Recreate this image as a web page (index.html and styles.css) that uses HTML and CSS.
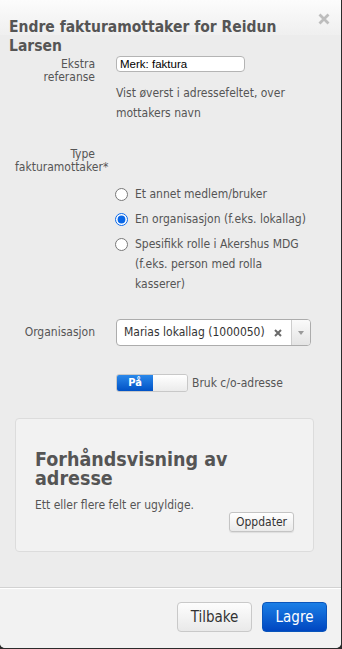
FILE: index.html
```html
<!DOCTYPE html>
<html lang="no">
<head>
    <meta charset="UTF-8">
    <meta name="viewport" content="width=device-width, initial-scale=1.0">
    <title>Endre fakturamottaker</title>
    <link rel="stylesheet" href="styles.css">
</head>
<body>
    <div class="dialog">
        <div class="dialog-head">
            <h2 class="dialog-title">Endre fakturamottaker for Reidun Larsen</h2>
            <button class="close" title="Lukk">
                <svg width="12" height="12" viewBox="0 0 12 12"><path d="M1.5 1.5L10.5 10.5M10.5 1.5L1.5 10.5" stroke="#bdbdbd" stroke-width="2.8" fill="none"/></svg>
            </button>
        </div>

        <div class="dialog-body">
            <div class="row">
                <label class="lbl" for="ref">Ekstra referanse</label>
                <div class="field">
                    <input class="text-input" id="ref" type="text" value="Merk: faktura">
                    <p class="hint">Vist øverst i adressefeltet, over mottakers navn</p>
                </div>
            </div>

            <div class="row row-type">
                <div class="lbl">Type fakturamottaker*</div>
                <div class="field options">
                    <label class="option"><input type="radio" name="type"> <span>Et annet medlem/bruker</span></label>
                    <label class="option"><input type="radio" name="type" checked> <span>En organisasjon (f.eks. lokallag)</span></label>
                    <label class="option"><input type="radio" name="type"> <span>Spesifikk rolle i Akershus MDG (f.eks. person med rolla kasserer)</span></label>
                </div>
            </div>

            <div class="row row-org">
                <div class="lbl">Organisasjon</div>
                <div class="field">
                    <div class="select">
                        <span class="select-value">Marias lokallag (1000050)</span>
                        <span class="select-clear">
                            <svg width="8" height="8" viewBox="0 0 8 8"><path d="M1 1L7 7M7 1L1 7" stroke="#6a6a6a" stroke-width="2" fill="none"/></svg>
                        </span>
                        <span class="select-arrow">
                            <svg width="6" height="4" viewBox="0 0 6 4"><path d="M0 0H6L3 4Z" fill="#9a9a9a"/></svg>
                        </span>
                    </div>
                </div>
            </div>

            <div class="row row-co">
                <div class="lbl"></div>
                <div class="field co">
                    <div class="toggle">
                        <span class="toggle-on">På</span>
                        <span class="toggle-off"></span>
                    </div>
                    <span>Bruk c/o-adresse</span>
                </div>
            </div>

            <div class="preview">
                <h3>Forhåndsvisning av adresse</h3>
                <p>Ett eller flere felt er ugyldige.</p>
                <div class="preview-actions">
                    <button class="btn-small">Oppdater</button>
                </div>
            </div>
        </div>

        <div class="dialog-foot">
            <button class="btn btn-back">Tilbake</button>
            <button class="btn btn-save">Lagre</button>
        </div>
    </div>
</body>
</html>
```

FILE: styles.css
```css
html, body {
    margin: 0;
    padding: 0;
    background-color: #2b2b2b;
}
body {
    height: 649px;
    font-family: "DejaVu Sans Condensed", "DejaVu Sans", sans-serif;
    font-stretch: condensed;
    color: #555;
}
.dialog {
    width: 341px;
    height: 648px;
    display: flex;
    flex-direction: column;
    background: linear-gradient(#fcfcfc, #efefef) 0 0 / 100% 35px no-repeat, #ececec;
    border-radius: 0 0 5px 5px;
    overflow: hidden;
}
.dialog-head {
    display: flex;
    align-items: flex-start;
    padding: 18px 11px 0 9px;
}
.dialog-title {
    flex: 1;
    margin: 0;
    font-size: 15.5px;
    line-height: 19px;
    font-weight: bold;
    color: #555;
}
.close {
    margin: -5px 0 0 8px;
    padding: 0;
    width: 12px;
    height: 12px;
    border: none;
    background: none;
    cursor: pointer;
}
.close svg {
    display: block;
}
.dialog-body {
    flex: 1;
    padding: 0 27px 0 15px;
}
.row {
    display: grid;
    grid-template-columns: 80px 1fr;
    column-gap: 21px;
}
.lbl {
    text-align: right;
    font-size: 12px;
    line-height: 13px;
    padding-top: 2px;
    color: #555;
}
.text-input {
    display: block;
    box-sizing: border-box;
    width: 129px;
    height: 16px;
    padding: 0 3px;
    border: 1px solid #b4b4b4;
    border-radius: 4px;
    background-color: #fff;
    font-family: "Liberation Sans", Arial, sans-serif;
    font-size: 11.5px;
    color: #000;
    outline: none;
}
.hint {
    margin: 11px 0 0;
    font-size: 12px;
    line-height: 20px;
    color: #555;
}
.row-type {
    margin-top: 25px;
}
.row-type .lbl {
    padding-top: 0;
}
.options {
    padding-top: 36px;
    display: flex;
    flex-direction: column;
    gap: 5px;
}
.option {
    display: flex;
    align-items: flex-start;
    font-size: 12px;
    line-height: 20px;
    color: #555;
}
.option input {
    width: 13px;
    height: 13px;
    margin: 4px 7px 0 -1px;
    flex-shrink: 0;
    accent-color: #0a67e6;
}
.row-org {
    margin-top: 25px;
    align-items: center;
}
.row-org .lbl {
    padding-top: 0;
}
.select {
    display: flex;
    box-sizing: border-box;
    width: 195px;
    height: 27px;
    border: 1px solid #acacac;
    border-radius: 4px;
    background-color: #fff;
}
.select-value {
    flex: 1;
    padding-left: 7px;
    font-size: 12px;
    line-height: 25px;
    color: #333;
    white-space: nowrap;
}
.select-clear {
    display: flex;
    align-items: center;
    margin-right: 9px;
}
.select-arrow {
    width: 18px;
    display: flex;
    align-items: center;
    justify-content: center;
    border-left: 1px solid #cdcdcd;
    border-radius: 0 3px 3px 0;
    background: linear-gradient(#fafafa, #e4e4e4);
}
.row-co {
    margin-top: 28px;
}
.co {
    display: flex;
    align-items: center;
    gap: 4px;
    font-size: 12px;
    color: #555;
}
.toggle {
    display: flex;
    box-sizing: border-box;
    width: 72px;
    height: 18px;
    border: 1px solid #c8c8c8;
    border-radius: 3px;
    overflow: hidden;
}
.toggle-on {
    width: 36px;
    background: linear-gradient(#2a88ea, #0052c6);
    color: #fff;
    font-size: 11px;
    font-weight: bold;
    line-height: 16px;
    text-align: center;
}
.toggle-off {
    flex: 1;
    background: linear-gradient(#fff, #ebebeb);
}
.preview {
    margin: 26px 0 0;
    padding: 31px 19px 19px;
    border: 1px solid #dcdcdc;
    border-radius: 4px;
    background-color: #f2f2f2;
}
.preview h3 {
    margin: 0;
    font-size: 19.5px;
    line-height: 19px;
    font-weight: bold;
    color: #555;
}
.preview p {
    margin: 7px 0 0;
    font-size: 12px;
    line-height: 20px;
    color: #555;
}
.preview-actions {
    display: flex;
    justify-content: flex-end;
    margin-top: -3px;
}
.btn-small {
    height: 20px;
    padding: 0 6px;
    border: 1px solid #c4c4c4;
    border-radius: 3px;
    background: linear-gradient(#fff, #eaeaea);
    font-family: inherit;
    font-size: 12px;
    color: #333;
    box-shadow: 0 1px 1px rgba(0,0,0,0.08);
}
.dialog-foot {
    box-sizing: border-box;
    height: 61px;
    display: flex;
    justify-content: flex-end;
    gap: 10px;
    padding: 14px 14px 0;
    border-top: 1px solid #d2d2d2;
    box-shadow: inset 0 1px #fff;
    background-color: #f2f2f2;
}
.btn {
    height: 30px;
    border-radius: 4px;
    font-family: inherit;
    font-size: 15px;
    padding: 0;
    cursor: pointer;
}
.btn-back {
    width: 75px;
    border: 1px solid #c9c9c9;
    background: linear-gradient(#fdfdfd, #e9e9e9);
    color: #333;
}
.btn-save {
    width: 65px;
    border: 1px solid #0a55bb;
    background: linear-gradient(#1b7fe6, #0046c0);
    color: #fff;
}
```
